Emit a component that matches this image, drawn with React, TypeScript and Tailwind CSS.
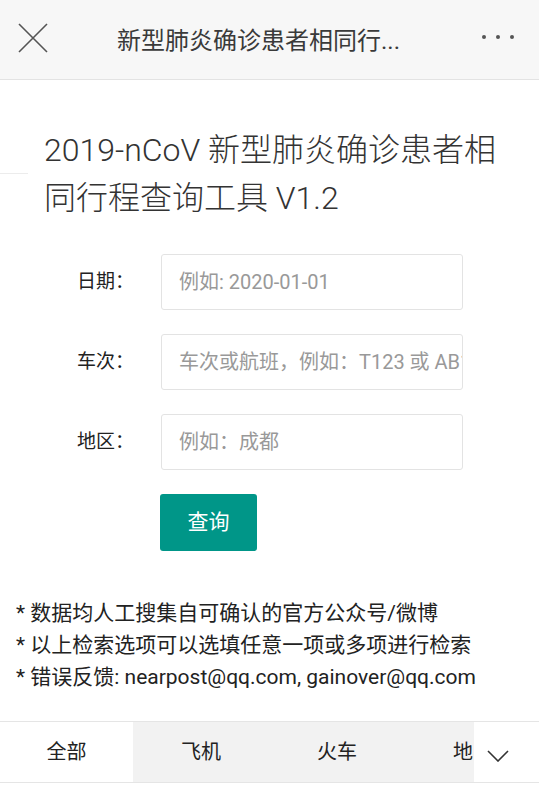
const fontStack = "font-['Roboto','Noto_Sans_CJK_SC',sans-serif]";

const fields = [
  { label: "日期：", placeholder: "例如: 2020-01-01" },
  { label: "车次：", placeholder: "车次或航班，例如：T123 或 AB1234" },
  { label: "地区：", placeholder: "例如：成都" },
];

const tabs = ["全部", "飞机", "火车", "地区", "公交", "其他"];

const App = () => {
  return (
    <div className={`min-h-screen w-full bg-white ${fontStack}`}>
      {/* top bar */}
      <div className="h-[80px] bg-[#f7f7f7] border-b border-[#e3e3e3] flex items-center">
        <div className="w-[117px] pl-[18px] flex items-center">
          <svg width="30" height="30" viewBox="0 0 30 30" className="mt-[-4px]">
            <path d="M1 1 L29 29 M29 1 L1 29" stroke="#555" strokeWidth="1.6" fill="none" />
          </svg>
        </div>
        <div className="flex-1 text-[24px] text-[#3a3a3a] leading-none whitespace-nowrap mt-[2px]">
          新型肺炎确诊患者相同行...
        </div>
        <div className="flex items-center gap-[10px] pr-[25px] mt-[-6px]">
          <span className="w-[4px] h-[4px] rounded-full bg-[#555]" />
          <span className="w-[4px] h-[4px] rounded-full bg-[#555]" />
          <span className="w-[4px] h-[4px] rounded-full bg-[#555]" />
        </div>
      </div>

      {/* heading */}
      <div className="relative mt-[46px] pl-[44px] pr-[24px]">
        <div className="absolute left-0 top-[47px] w-[28px] h-px bg-[#ececec]" />
        <h1 className="text-[32px] leading-[48px] text-[#333] font-light">
          2019-nCoV 新型肺炎确诊患者相同行程查询工具 V1.2
        </h1>
      </div>

      {/* form */}
      <div className="mt-[32px] flex flex-col gap-[24px]">
        {fields.map((f) => (
          <div key={f.label} className="flex items-center">
            <label className="w-[134px] text-right text-[19px] text-[#222]">{f.label}</label>
            <input
              placeholder={f.placeholder}
              className="ml-[27px] w-[302px] h-[56px] border border-[#e3e3e3] rounded-[3px] pl-[17px] text-[20px] placeholder:text-[#999] outline-none"
            />
          </div>
        ))}
        <div className="pl-[160px]">
          <button className="w-[97px] h-[57px] bg-[#009688] rounded-[3px] text-white text-[21px]">
            查询
          </button>
        </div>
      </div>

      {/* notes */}
      <div className="mt-[46px] pl-[16px] text-[21px] leading-[32px] text-[#222]">
        <p>* 数据均人工搜集自可确认的官方公众号/微博</p>
        <p>* 以上检索选项可以选填任意一项或多项进行检索</p>
        <p>* 错误反馈: nearpost@qq.com, gainover@qq.com</p>
      </div>

      {/* tabs */}
      <div className="mt-[28px] h-[62px] border-y border-[#e5e5e5] flex">
        <div className="flex-1 flex overflow-hidden">
          {tabs.map((t, i) => (
            <div
              key={t}
              className={`shrink-0 h-full flex items-center justify-center text-[20px] text-[#222] ${
                i === 0 ? "w-[133px] bg-white" : "w-[136px] bg-[#f2f2f2]"
              }`}
            >
              {t}
            </div>
          ))}
        </div>
        <div className="w-[65px] h-full bg-white flex items-center pl-[13px]">
          <svg width="22" height="12" viewBox="0 0 22 12" className="mt-[8px]">
            <path d="M1 1 L11 11 L21 1" stroke="#333" strokeWidth="1.6" fill="none" />
          </svg>
        </div>
      </div>
    </div>
  );
};

export default App;
